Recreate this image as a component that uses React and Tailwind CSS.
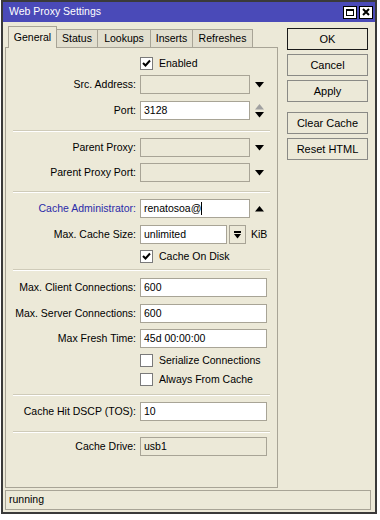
import React from 'react';

const FONT = "font-['Liberation_Sans',Arial,sans-serif]";

function DownArrow() {
  return (
    <svg width="9" height="6" viewBox="0 0 9 6">
      <path d="M0 0 H9 L4.5 5.5 Z" fill="#000" />
    </svg>
  );
}

function UpArrow({ color = '#000' }) {
  return (
    <svg width="9" height="6" viewBox="0 0 9 6">
      <path d="M0 5.5 H9 L4.5 0 Z" fill={color} />
    </svg>
  );
}

function Checkbox({ checked }) {
  return (
    <div className="w-[13px] h-[13px] border border-[#7a7a7a] bg-white flex items-center justify-center">
      {checked && (
        <svg width="9" height="9" viewBox="0 0 9 9">
          <path d="M1 4 L3.5 6.5 L8 1.5" stroke="#000" strokeWidth="2" fill="none" />
        </svg>
      )}
    </div>
  );
}

function Field({ value, width, disabled, cursor }) {
  return (
    <div
      className={
        disabled
          ? 'h-[19px] border border-[#a8a496] bg-[#ece9d8] px-[3px] flex items-center'
          : 'h-[19px] border border-[#a8a496] bg-white px-[3px] flex items-center'
      }
      style={{ width }}
    >
      <span>{value}</span>
      {cursor && <span className="w-px h-[13px] bg-black" />}
    </div>
  );
}

function Row({ label, mt, blue, children }) {
  return (
    <div className={`flex items-center h-[19px] ${mt}`}>
      <div
        className={
          blue
            ? 'w-[130px] text-right text-[#2b2ba8]'
            : 'w-[130px] text-right text-black'
        }
      >
        {label}
      </div>
      <div className="ml-[4px] flex items-center">{children}</div>
    </div>
  );
}

function CheckRow({ label, checked, mt }) {
  return (
    <div className={`flex items-center h-[19px] pl-[134px] ${mt}`}>
      <Checkbox checked={checked} />
      <span className="ml-[6px]">{label}</span>
    </div>
  );
}

function Sep({ mt }) {
  return (
    <div className={`mx-[7px] ${mt}`}>
      <div className="h-px bg-[#cfcbb9]" />
      <div className="h-px bg-white" />
    </div>
  );
}

function Btn({ label, primary, mt }) {
  return (
    <div
      className={
        primary
          ? `h-[22px] w-[81px] border border-[#1a1a1a] bg-[#ece9d8] flex items-center justify-center ${mt}`
          : `h-[22px] w-[81px] border border-[#8a8a86] bg-[#ece9d8] flex items-center justify-center ${mt}`
      }
    >
      {label}
    </div>
  );
}

const TABS = [
  { label: 'Status', w: 'w-[41px]' },
  { label: 'Lookups', w: 'w-[53px]' },
  { label: 'Inserts', w: 'w-[42px]' },
  { label: 'Refreshes', w: 'w-[60px]' },
];

export default function App() {
  return (
    <div className={`w-[380px] h-[520px] bg-white text-[10.5px] text-black ${FONT}`}>
      <div className="ml-[1px] w-[376px] h-[514px] border-2 border-[#3a3a3a] bg-[#ece9d8] flex flex-col">
        <div className="h-[20px] bg-[#4a4ab8] flex items-center justify-between pl-[6px] pr-[2px]">
          <span className="text-white text-[10.5px]">Web Proxy Settings</span>
          <div className="flex gap-[2px]">
            <div className="w-[14px] h-[13px] bg-white border border-black flex items-center justify-center">
              <div className="w-[8px] h-[7px] border border-black border-t-2" />
            </div>
            <div className="w-[14px] h-[13px] bg-white border border-black flex items-center justify-center">
              <svg width="8" height="8" viewBox="0 0 8 8">
                <path d="M1 1 L7 7 M7 1 L1 7" stroke="#000" strokeWidth="2" />
              </svg>
            </div>
          </div>
        </div>

        <div className="flex">
          <div className="ml-[2px] mt-[3px] w-[273px]">
            <div className="h-[22px] flex items-end pl-[3px]">
              <div className="relative z-10 h-[22px] -mb-px w-[49px] border border-b-0 border-[#a8a496] bg-[#ece9d8] flex items-start justify-center pt-[3px]">
                General
              </div>
              {TABS.map((t) => (
                <div
                  key={t.label}
                  className={`h-[18px] ${t.w} border border-b-0 border-l-0 border-[#a8a496] bg-[#e2dfcf] flex items-center justify-center`}
                >
                  {t.label}
                </div>
              ))}
            </div>
            <div className="h-[441px] border border-[#a8a496] flex flex-col">
              <CheckRow label="Enabled" checked mt="mt-[6px]" />
              <Row label="Src. Address:" mt="mt-[2px]">
                <Field width={110} disabled />
                <div className="w-[18px] flex justify-center">
                  <DownArrow />
                </div>
              </Row>
              <Row label="Port:" mt="mt-[7px]">
                <Field width={110} value="3128" />
                <div className="w-[18px] flex flex-col items-center gap-[2px]">
                  <UpArrow color="#a0a0a0" />
                  <DownArrow />
                </div>
              </Row>
              <Sep mt="mt-[10px]" />
              <Row label="Parent Proxy:" mt="mt-[6px]">
                <Field width={110} disabled />
                <div className="w-[18px] flex justify-center">
                  <DownArrow />
                </div>
              </Row>
              <Row label="Parent Proxy Port:" mt="mt-[6px]">
                <Field width={110} disabled />
                <div className="w-[18px] flex justify-center">
                  <DownArrow />
                </div>
              </Row>
              <Sep mt="mt-[9px]" />
              <Row label="Cache Administrator:" mt="mt-[6px]" blue>
                <Field width={110} value="renatosoa@" cursor />
                <div className="w-[18px] flex justify-center">
                  <UpArrow />
                </div>
              </Row>
              <Row label="Max. Cache Size:" mt="mt-[7px]">
                <Field width={87} value="unlimited" />
                <div className="ml-[2px] w-[17px] h-[19px] border border-[#a8a496] flex flex-col items-center justify-center gap-px">
                  <div className="w-[7px] h-[2px] bg-black" />
                  <svg width="7" height="5" viewBox="0 0 7 5">
                    <path d="M0 0 H7 L3.5 4.5 Z" fill="#000" />
                  </svg>
                </div>
                <span className="ml-[5px]">KiB</span>
              </Row>
              <CheckRow label="Cache On Disk" checked mt="mt-[3px]" />
              <Sep mt="mt-[3px]" />
              <Row label="Max. Client Connections:" mt="mt-[7px]">
                <Field width={127} value="600" />
              </Row>
              <Row label="Max. Server Connections:" mt="mt-[7px]">
                <Field width={127} value="600" />
              </Row>
              <Row label="Max Fresh Time:" mt="mt-[6px]">
                <Field width={127} value="45d 00:00:00" />
              </Row>
              <CheckRow label="Serialize Connections" mt="mt-[3px]" />
              <CheckRow label="Always From Cache" mt="mt-0" />
              <Sep mt="mt-[5px]" />
              <Row label="Cache Hit DSCP (TOS):" mt="mt-[6px]">
                <Field width={127} value="10" />
              </Row>
              <Sep mt="mt-[10px]" />
              <Row label="Cache Drive:" mt="mt-[4px]">
                <Field width={127} value="usb1" disabled />
              </Row>
            </div>
          </div>

          <div className="ml-[9px] mt-[6px] flex flex-col text-[11px]">
            <Btn label="OK" primary mt="mt-0" />
            <Btn label="Cancel" mt="mt-[4px]" />
            <Btn label="Apply" mt="mt-[4px]" />
            <Btn label="Clear Cache" mt="mt-[10px]" />
            <Btn label="Reset HTML" mt="mt-[4px]" />
          </div>
        </div>

        <div className="mt-[2px] ml-[2px] w-[366px] h-[20px] border border-[#a8a496] flex items-center px-[3px]">
          running
        </div>
      </div>
    </div>
  );
}
